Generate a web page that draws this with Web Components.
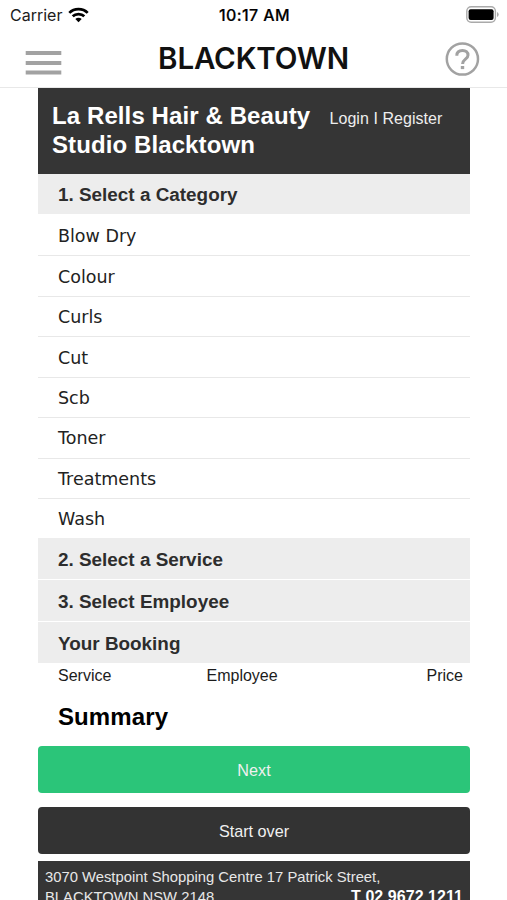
<!DOCTYPE html>
<html lang="en">
<head>
<meta charset="utf-8">
<title>Blacktown booking</title>
<style>
html, body { margin: 0; background: #fff; overflow: hidden; height: 900px; }
body { font-family: "Liberation Sans", Arial, sans-serif; color: #111; }
</style>
</head>
<body>
<template id="status-bar">
<style>
:host { display: grid; grid-template-columns: 1fr auto 1fr; align-items: center; height: 30px; box-sizing: border-box; padding: 0 8px 0 10px; font: 400 16px/20px Inter, sans-serif; color: #1c1c1c; }
.left { display: flex; align-items: center; gap: 6px; }
.time { font-weight: 500; font-size: 16px; letter-spacing: .4px; color: #000; -webkit-text-stroke: .2px; }
.battery { justify-self: end; display: block; margin-top: -2px; }
svg { display: block; }
</style>
<div class="left"><span>Carrier</span>
<svg width="21" height="16" viewBox="0 0 21 16" fill="none" stroke="#000" stroke-width="2.7"><path d="M1.3 5.9C6.2.9 14.8.9 19.7 5.9"/><path d="M4.7 9.3c3-3 8.6-3 11.6 0"/><path d="M10.5 15.2 7.3 12c1.8-1.7 4.6-1.7 6.4 0z" fill="#000" stroke="none"/></svg></div>
<span class="time">10:17 AM</span>
<svg class="battery" width="33" height="17" viewBox="0 0 33 17"><rect x=".8" y=".8" width="28.6" height="15.4" rx="4.4" fill="#fff" stroke="#aaa" stroke-width="1.4"/><rect x="2.6" y="3.2" width="25" height="10.8" rx="2" fill="#000"/><path d="M31 6v5q1.7-.8 1.7-2.5T31 6z" fill="#aaa"/></svg>
</template>

<template id="nav-bar">
<style>
:host { display: grid; grid-template-columns: 36px 1fr 36px; align-items: center; height: 58px; box-sizing: border-box; padding: 1px 26px 0 25px; border-bottom: 1px solid #e8e8e8; }
h1 { margin: 0; padding: 0 0 3px 1px; text-align: center; font: 600 29.5px/36px Inter, sans-serif; letter-spacing: -.15px; color: #111; white-space: nowrap; }
svg { display: block; }
.menu { margin-top: 7px; }
</style>
<svg class="menu" width="37" height="26" viewBox="0 0 37 26" fill="#a2a2a2"><path d="M.7 1h35.6v4H.7zM.7 11h35.6v4H.7zM.7 20.6h35.6v4H.7z"/></svg>
<h1><slot></slot></h1>
<svg width="36" height="36" viewBox="0 0 36 36" fill="none" stroke="#a2a2a2"><circle cx="17.4" cy="18" r="15.6" stroke-width="2.5"/><path d="M11.8 14.7c0-3.4 2.4-5.2 5.7-5.2s5.5 1.8 5.5 4.7c0 4-5.4 4-5.4 8.7" stroke-width="3"/><path d="M15.8 25h3.4v3.1h-3.4z" fill="#a2a2a2" stroke="none"/></svg>
</template>

<template id="salon-header">
<style>
:host { display: flex; align-items: flex-start; height: 85.5px; box-sizing: border-box; padding: 13px 14px 0; background: #353535; color: #fff; }
h2 { margin: 0; width: 277.5px; font: bold 24px/29px "Liberation Sans", sans-serif; letter-spacing: .1px; }
.account { font-size: 16px; line-height: 20px; padding-top: 8px; letter-spacing: .05px; color: #eee; white-space: nowrap; }
</style>
<h2><slot></slot></h2><div class="account"><slot name="account"></slot></div>
</template>

<template id="section-heading">
<style>
:host { display: flex; align-items: center; height: 40.6px; box-sizing: border-box; padding: 2px 0 0 20px; background: #ededed; color: #2d2d2d; font: bold 18.9px/24px "Liberation Sans", sans-serif; }
</style>
<slot></slot>
</template>

<template id="category-row">
<style>
:host { display: flex; align-items: center; height: 40.45px; box-sizing: border-box; padding: 2px 0 0 20px; font: 17.5px/22px "DejaVu Sans", sans-serif; color: #222; }
:host(:not(:first-of-type)) { border-top: 1px solid #e8e8e8; padding-top: 1px; }
</style>
<slot></slot>
</template>

<template id="booking-columns">
<style>
:host { display: grid; grid-template-columns: 148.5px 1fr auto; align-items: center; padding: 0 7px 0 20px; height: 25px; font-size: 16px; line-height: 20px; color: #1c1c1c; }
</style>
<slot></slot>
</template>

<template id="action-button">
<style>
:host { display: block; }
button { display: block; width: 100%; height: 47px; border: 0; border-radius: 4px; padding: 2px 0 0; background: var(--fill, #333); color: #f0f0f0; font: 16.2px/20px "Liberation Sans", sans-serif; }
</style>
<button><slot></slot></button>
</template>

<template id="salon-footer">
<style>
:host { display: flex; flex-direction: column; height: 60px; box-sizing: border-box; padding: 6.5px 7px 0; background: #353535; color: #e8e8e8; font-size: 14.8px; line-height: 20px; white-space: nowrap; }
.row { display: flex; justify-content: space-between; }
.phone { font-weight: bold; font-size: 16px; letter-spacing: .05px; color: #fff; }
</style>
<div><slot name="street"></slot></div>
<div class="row"><slot name="city"></slot><span class="phone"><slot name="phone"></slot></span></div>
</template>

<template id="booking-app">
<style>
:host { display: block; width: 507px; height: 900px; overflow: hidden; background: #fff; }
main { display: flex; flex-direction: column; margin: 0 37px 0 38px; }
.categories { padding-top: .9px; }
.steps { display: flex; flex-direction: column; gap: 1.3px; }
.steps section-heading { height: 40.7px; }
h3 { margin: 0; padding: 14px 0 0 20px; height: 57.5px; box-sizing: border-box; font: bold 24px/30px "Liberation Sans", sans-serif; letter-spacing: .1px; color: #000; }
.actions { display: flex; flex-direction: column; gap: 14px; margin-bottom: 7px; }
.next { --fill: #2bc579; }
</style>
<status-bar></status-bar>
<nav-bar>BLACKTOWN</nav-bar>
<main>
<salon-header>La Rells Hair &amp; Beauty Studio Blacktown<span slot="account">Login I Register</span></salon-header>
<section-heading>1. Select a Category</section-heading>
<div class="categories">
<category-row>Blow Dry</category-row>
<category-row>Colour</category-row>
<category-row>Curls</category-row>
<category-row>Cut</category-row>
<category-row>Scb</category-row>
<category-row>Toner</category-row>
<category-row>Treatments</category-row>
<category-row>Wash</category-row>
</div>
<div class="steps">
<section-heading>2. Select a Service</section-heading>
<section-heading>3. Select Employee</section-heading>
<section-heading>Your Booking</section-heading>
</div>
<booking-columns><span>Service</span><span>Employee</span><span>Price</span></booking-columns>
<h3>Summary</h3>
<div class="actions">
<action-button class="next">Next</action-button>
<action-button>Start over</action-button>
</div>
<salon-footer><span slot="street">3070 Westpoint Shopping Centre 17 Patrick Street,</span><span slot="city">BLACKTOWN NSW 2148</span><span slot="phone">T 02 9672 1211</span></salon-footer>
</main>
</template>

<booking-app></booking-app>

<script>
for (const template of document.querySelectorAll('template')) {
  customElements.define(template.id, class extends HTMLElement {
    constructor() {
      super();
      this.attachShadow({ mode: 'open' }).appendChild(template.content.cloneNode(true));
    }
  });
}
</script>
</body>
</html>
